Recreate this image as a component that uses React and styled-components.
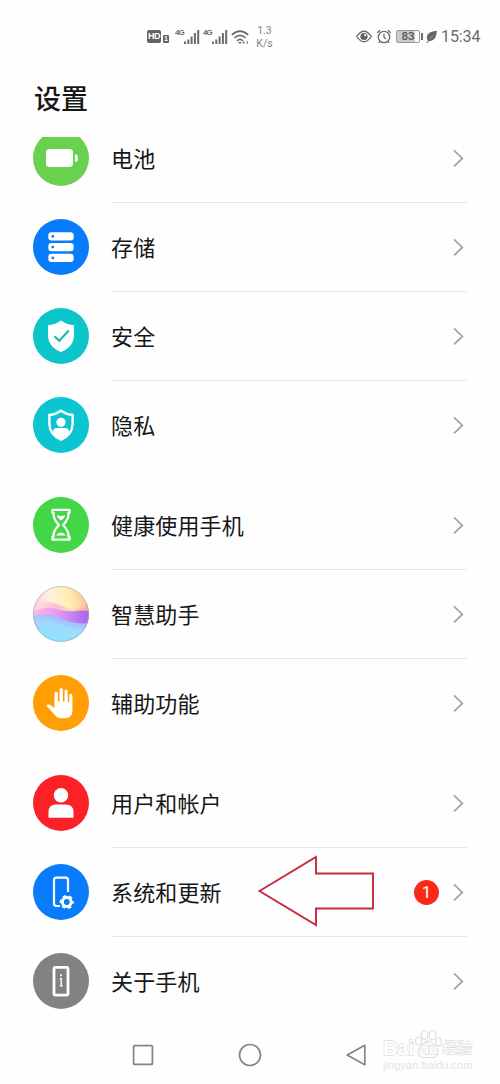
import React from "react";
import styled, { createGlobalStyle } from "styled-components";

const GlobalStyle = createGlobalStyle`
  * { box-sizing: border-box; }
  body { margin: 0; background: #fefefe; }
`;

const Screen = styled.main`
  position: relative;
  width: 500px;
  height: 1084px;
  overflow: hidden;
  display: flex;
  flex-direction: column;
  background: #fefefe;
  color: #161616;
  font-family: "Noto Sans CJK SC", sans-serif;
`;

const StatusBar = styled.header`
  height: 73px;
  padding: 0 20px 0 147px;
  display: flex;
  align-items: center;
  justify-content: space-between;
  color: #6b6b6b;
`;

const StatusGroup = styled.div`
  display: flex;
  align-items: center;
  gap: ${(p) => p.$gap}px;
`;

const Glyph = styled.svg`
  display: block;
  flex: none;
  overflow: visible;
  paint-order: normal;
`;

const HdBadge = styled.span`
  width: 14px;
  height: 13px;
  border-radius: 2px;
  background: #626262;
  color: #fff;
  font: 700 9px/13px "Liberation Sans", sans-serif;
  letter-spacing: -0.4px;
  text-align: center;
`;

const SimBadge = styled.span`
  width: 6px;
  height: 8px;
  margin: 5px 3px 0 0;
  border-radius: 1px;
  background: #626262;
  color: #fff;
  font: 700 7px/8px "Liberation Sans", sans-serif;
  text-align: center;
`;

const Signal = styled.span`
  display: flex;
  width: 25px;
  height: 14px;
`;

const Network = styled.span`
  width: 9px;
  margin-top: -1px;
  font: 700 8px/8px "Liberation Sans", sans-serif;
  letter-spacing: -0.9px;
`;

const Speed = styled.span`
  width: 17px;
  margin-left: 4px;
  font: 10.5px/13px Roboto, sans-serif;
  text-align: center;
  white-space: nowrap;
  color: #858585;
`;

const Battery = styled.span`
  position: relative;
  width: 24px;
  height: 13px;
  margin-right: 2px;
  border: 1px solid #999;
  border-radius: 2px;
  background: linear-gradient(90deg, #cbcbcb 83%, #fefefe 83%);
  color: #575757;
  font: 500 11.5px/11.5px Roboto, sans-serif;
  text-align: center;

  &::after {
    content: "";
    position: absolute;
    top: 2px;
    right: -4px;
    width: 2px;
    height: 7px;
    background: #6b6b6b;
  }
`;

const Clock = styled.span`
  width: 39px;
  font: 16px/18px Roboto, sans-serif;
  letter-spacing: -0.1px;
  white-space: nowrap;
`;

const Title = styled.h1`
  height: 64px;
  margin: 0;
  padding: 5px 34px 0;
  font-size: 27px;
  line-height: 40px;
  font-weight: 500;
`;

const List = styled.section`
  height: 889px;
  overflow: hidden;
  display: flex;
  flex-direction: column;
  justify-content: flex-end;
  gap: 11px;
  padding: 0 33px;
`;

const Group = styled.div`
  flex: none;
  display: flex;
  flex-direction: column;
`;

const Row = styled.div`
  height: 89px;
  display: flex;
  gap: 22px;
`;

const IconDisc = styled.span`
  flex: none;
  width: 56px;
  height: 56px;
  margin-top: 16.4px;
  border-radius: 50%;
  overflow: hidden;
  background: ${(p) => p.$color};
`;

const RowBody = styled.div`
  flex: 1;
  display: flex;
  align-items: center;
  padding-right: 3px;
  border-bottom: 1px solid ${(p) => (p.$last ? "transparent" : "#e6e6e6")};
`;

const Label = styled.span`
  flex: 1;
  padding-bottom: 2px;
  font-size: 22px;
  line-height: 32px;
  font-weight: 400;
  letter-spacing: 0.15px;
`;

const Count = styled.span`
  width: 25px;
  height: 25px;
  margin-right: 14px;
  border-radius: 50%;
  background: #fb2a18;
  color: #fff;
  font: 17px/25px Roboto, sans-serif;
  text-align: center;
`;

const NavBar = styled.nav`
  height: 58px;
  display: flex;
  justify-content: space-between;
  align-items: center;
  padding: 0 134px 0 132px;
`;

const Pointer = styled.svg`
  position: absolute;
  left: 256px;
  top: 853px;
`;

const Watermark = styled.div`
  position: absolute;
  left: 383px;
  top: 1029px;
  width: 92px;
  height: 46px;
  color: #fefefe;
  font-family: "Liberation Sans", "Noto Sans CJK SC", sans-serif;
`;

const MarkLine = styled.div`
  height: 30px;
  display: flex;
  align-items: flex-end;
  font-size: 20px;
  line-height: 22px;
  font-weight: 700;
  white-space: nowrap;
  paint-order: stroke fill;
  -webkit-text-stroke: 1.4px #dfdfdf;
`;

const MarkPaw = styled.span`
  position: relative;
  width: 28px;
  height: 30px;
`;

const PawText = styled.span`
  position: absolute;
  left: 6px;
  top: 13px;
  font-size: 14px;
  line-height: 14px;
`;

const MarkCjk = styled.span`
  font-size: 15px;
  line-height: 22px;
  font-weight: 400;
`;

const MarkUrl = styled.div`
  font-size: 11px;
  line-height: 13px;
  color: #e4e4e4;
  letter-spacing: 0.05px;
`;

const SHIELD = "M28 12.5 Q34.5 17 41 17.2 V27 C41 35.5 36 40.8 28 44 C20 40.8 15 35.5 15 27 V17.2 Q21.5 17 28 12.5Z";

const drawings = {
  battery: (
    <g fill="#fff">
      <rect x="13" y="19" width="27" height="18" rx="3.5" />
      <path d="M42 24.5h1.2q1.5 0 1.5 1.6v4q0 1.6-1.5 1.6H42z" />
    </g>
  ),
  storage: (
    <g>
      {[13.2, 24, 34.8].map((y) => (
        <g key={y}>
          <rect x="15.3" y={y} width="25.4" height="8.2" rx="3.2" fill="#fff" />
          <circle cx="19.8" cy={y + 4.1} r="1.4" fill="#087cf5" />
        </g>
      ))}
    </g>
  ),
  security: (
    <g>
      <path d={SHIELD} fill="#fff" />
      <path d="M21.5 28.2 26.3 32.8 35.8 22.5" fill="none" stroke="#18b8a8" strokeWidth="2" />
    </g>
  ),
  privacy: (
    <g>
      <path d="M28 13.8 Q34 17.7 39.6 18 V27 C39.6 34.5 35 39.5 28 42.7 C21 39.5 16.4 34.5 16.4 27 V18 Q22 17.7 28 13.8Z" fill="none" stroke="#fff" strokeWidth="2.4" />
      <circle cx="28" cy="25.3" r="4.6" fill="#fff" />
      <path d="M20 36.5V35q0-4 4-4h8q4 0 4 4v1.5Q33 40.5 28 42.7 23 40.5 20 36.5Z" fill="#fff" />
    </g>
  ),
  hourglass: (
    <g stroke="#fff" strokeWidth="2.3" fill="none" strokeLinejoin="round">
      <path d="M19.5 12.8H36.5V15.8H35.5C36 22 32.5 25.5 30 28 32.5 30.5 36 34 35.5 39.7H36.5V42.7H19.5V39.7H20.5C20 34 23.5 30.5 26 28 23.5 25.5 20 22 20.5 15.8H19.5Z" />
      <path d="M24 18q4 2 8 0-.2 3.2-4 5.5-3.8-2.3-4-5.5ZM23 38.5q5-6 10 0Z" fill="#fff" stroke="none" />
    </g>
  ),
  assistant: (
    <g>
      <defs>
        <linearGradient id="dawn" x1="0" y1=".45" x2="1" y2=".25">
          <stop offset="0" stopColor="#ffc9e3" />
          <stop offset=".35" stopColor="#fff0dc" />
          <stop offset=".65" stopColor="#fff0b0" />
          <stop offset="1" stopColor="#ffc08e" />
        </linearGradient>
        <linearGradient id="crest" x1="0" y1="0" x2="1" y2=".3">
          <stop offset="0" stopColor="#ffe0ee" stopOpacity=".3" />
          <stop offset=".4" stopColor="#ffbcd0" />
          <stop offset=".75" stopColor="#ffd9a8" />
          <stop offset="1" stopColor="#ff9f9f" />
        </linearGradient>
        <linearGradient id="wave" x1="0" y1="0" x2="1" y2="0">
          <stop offset="0" stopColor="#ffb9e2" />
          <stop offset=".35" stopColor="#f09df0" />
          <stop offset=".65" stopColor="#c987f4" />
          <stop offset="1" stopColor="#a565f0" />
        </linearGradient>
        <linearGradient id="sea" x1=".8" y1="0" x2=".3" y2="1">
          <stop offset="0" stopColor="#a9a4fa" />
          <stop offset=".45" stopColor="#a4d2fd" />
          <stop offset="1" stopColor="#84e2fb" />
        </linearGradient>
      </defs>
      <rect width="56" height="56" fill="url(#dawn)" />
      <path d="M0 23Q10 13 21 17T38 23Q47 24 56 16V40H0Z" fill="url(#crest)" />
      <path d="M0 26Q12 20 23 23T42 25Q49 24 56 25V43H0Z" fill="url(#wave)" />
      <path d="M0 30Q15 26 26 31 39 39 56 37V56H0Z" fill="url(#sea)" />
      <path d="M0 39Q12 33 23 37T46 43L56 41V56H0Z" fill="#97eafe" opacity=".35" />
      <circle cx="28" cy="28" r="27.5" fill="none" stroke="#a5a5b5" strokeOpacity=".65" />
    </g>
  ),
  hand: (
    <path d="M14.2 29.7Q16.5 29 18.5 30.8L21.5 33V18.5Q21.5 16.6 23.2 16.6T24.9 18.5V26.5H26.5V14.8Q26.5 13 28.2 13T29.9 14.8V26.5H31.5V16.3Q31.5 14.5 33.1 14.5T34.7 16.3V27H36.2V20.5Q36.2 18.8 37.8 18.8T39.4 20.5V36Q39.4 43.3 32 43.3H28.5Q24.5 43.3 21.8 40L14.2 31.4Q13 30 14.2 29.7Z" fill="#fff" />
  ),
  user: (
    <g fill="#fff">
      <circle cx="28" cy="20.3" r="7.2" />
      <path d="M15.5 42.7V37q0-7.5 7.5-7.5H33q7.5 0 7.5 7.5v5.7Z" />
    </g>
  ),
  update: (
    <g fill="none" stroke="#fff">
      <path d="M35 28V16.2Q35 13.7 32.5 13.7H23.5Q21 13.7 21 16.2V39.5Q21 42 23.5 42H27" strokeWidth="2.2" />
      <circle cx="33.8" cy="38" r="4.4" strokeWidth="3" />
      <circle cx="33.8" cy="38" r="6.2" strokeWidth="1.8" strokeDasharray="3.3 3.19" strokeDashoffset="1.6" />
    </g>
  ),
  about: (
    <g>
      <rect x="21" y="14.3" width="14" height="27.8" rx="1.5" fill="none" stroke="#fff" strokeWidth="2.8" />
      <circle cx="28" cy="22.3" r="1.1" fill="#fff" />
      <path d="M26.8 25.7H28.2V32.5M26.8 32.8H29.6" fill="none" stroke="#fff" strokeWidth="1.4" />
    </g>
  ),
};

const groups = [
  [
    { label: "电池", icon: "battery", color: "#68d14d" },
    { label: "存储", icon: "storage", color: "#087cfb" },
    { label: "安全", icon: "security", color: "#0bc5cb" },
    { label: "隐私", icon: "privacy", color: "#0bc5d1" },
  ],
  [
    { label: "健康使用手机", icon: "hourglass", color: "#43d647" },
    { label: "智慧助手", icon: "assistant", color: "#b8d8ff" },
    { label: "辅助功能", icon: "hand", color: "#ff9f05" },
  ],
  [
    { label: "用户和帐户", icon: "user", color: "#fc2127" },
    { label: "系统和更新", icon: "update", color: "#087cfb", count: 1 },
    { label: "关于手机", icon: "about", color: "#828282" },
  ],
];

function SignalStrength() {
  return (
    <Signal>
      <Network>4G</Network>
      <Glyph width="16" height="14" viewBox="0 0 16 14">
        <path d="M1 11.5V14M4.3 9.5V14M7.6 6.5V14M10.9 3V14M14.2 0V14" stroke="#6b6b6b" strokeWidth="2" />
      </Glyph>
    </Signal>
  );
}

function SettingsRow({ item, last }) {
  return (
    <Row>
      <IconDisc $color={item.color}>
        <Glyph width="56" height="56" viewBox="0 0 56 56">{drawings[item.icon]}</Glyph>
      </IconDisc>
      <RowBody $last={last}>
        <Label>{item.label}</Label>
        {item.count && <Count>{item.count}</Count>}
        <Glyph width="11" height="18" viewBox="0 0 11 18">
          <path d="M1 1.4 9.3 9.4 1 17.4" fill="none" stroke="#a3a3a3" strokeWidth="1.8" />
        </Glyph>
      </RowBody>
    </Row>
  );
}

export default function App() {
  return (
    <Screen>
      <GlobalStyle />
      <StatusBar>
        <StatusGroup $gap={3}>
          <StatusGroup $gap={2}>
            <HdBadge>HD</HdBadge>
            <SimBadge>1</SimBadge>
          </StatusGroup>
          <SignalStrength />
          <SignalStrength />
          <Glyph width="18" height="14" viewBox="0 0 18 14">
            <path d="M.8 5Q9-2.8 17.2 5M3.4 8Q9 2.6 14.6 8M6 10.8Q9 8 12 10.8" fill="none" stroke="#6b6b6b" strokeWidth="1.7" />
            <path d="M9 14 6.9 11.9H11ZM11.5 12.5 13.3 10.7V14.2ZM17.5 12.5 15.7 10.7V14.2Z" fill="#6b6b6b" />
          </Glyph>
          <Speed>1.3<br />K/s</Speed>
        </StatusGroup>
        <StatusGroup $gap={4}>
          <Glyph width="16" height="13" viewBox="0 0 16 13">
            <path d="M.7 6.5Q8-4 15.3 6.5 8 17 .7 6.5Z" fill="none" stroke="#6b6b6b" strokeWidth="1.3" />
            <circle cx="8" cy="6.5" r="3.6" fill="#626262" />
            <circle cx="9.2" cy="5.2" r="1.1" fill="#fff" />
          </Glyph>
          <Glyph width="16" height="15" viewBox="0 0 16 15">
            <g fill="none" stroke="#6b6b6b" strokeWidth="1.3">
              <circle cx="8" cy="8" r="5.7" />
              <path d="M8 4.8V8.3L10 10M1.2 3.8 4 1.2M14.8 3.8 12 1.2M4 12.2 2.8 14M12 12.2 13.2 14" />
            </g>
          </Glyph>
          <Battery>83</Battery>
          <Glyph width="11" height="13" viewBox="0 0 11 13">
            <path d="M11 .8Q1 1.5.8 7.3.7 9.5 2 10.5L.4 12.7H1.7L3 11Q7 11.5 9.2 7.6 10.5 5 11 .8Z" fill="#666" />
            <path d="M3.4 9.2 7.6 4.8" stroke="#bbb" strokeWidth=".6" />
          </Glyph>
          <Clock>15:34</Clock>
        </StatusGroup>
      </StatusBar>

      <Title>设置</Title>

      <List>
        {groups.map((items) => (
          <Group key={items[0].label}>
            {items.map((item, i) => (
              <SettingsRow key={item.label} item={item} last={i === items.length - 1} />
            ))}
          </Group>
        ))}
      </List>

      <NavBar>
        <Glyph width="22" height="22" viewBox="0 0 22 22">
          <rect x="1.6" y="1.6" width="18.8" height="18.8" rx="1" fill="none" stroke="#858585" strokeWidth="1.7" />
        </Glyph>
        <Glyph width="24" height="24" viewBox="0 0 24 24">
          <circle cx="12" cy="12" r="10.5" fill="none" stroke="#858585" strokeWidth="1.7" />
        </Glyph>
        <Glyph width="20" height="24" viewBox="0 0 20 24">
          <path d="M18.8 2.2V21.8L1.2 12Z" fill="none" stroke="#858585" strokeWidth="1.7" strokeLinejoin="round" />
        </Glyph>
      </NavBar>

      <Pointer width="120" height="76" viewBox="0 0 120 76">
        <path d="M3.5 38 60 4V20.5H117V55.5H60V72Z" fill="none" stroke="#c72b3b" strokeWidth="1.9" />
      </Pointer>

      <Watermark>
        <MarkLine>
          <span>Bai</span>
          <MarkPaw>
            <Glyph width="28" height="30" viewBox="0 0 28 30">
              <g fill="#fefefe" stroke="#dcdcdc" strokeWidth="1.1">
                <ellipse cx="4.5" cy="12" rx="3" ry="4" />
                <ellipse cx="10.5" cy="6" rx="3.3" ry="4.5" />
                <ellipse cx="18.5" cy="6" rx="3.3" ry="4.5" />
                <ellipse cx="24.5" cy="13" rx="3" ry="4" />
                <path d="M9 15Q14 8.5 19 15L23 19.5Q26 26 20 28.5H8Q2 26 5 19.5Z" />
              </g>
            </Glyph>
            <PawText>du</PawText>
          </MarkPaw>
          <MarkCjk>经验</MarkCjk>
        </MarkLine>
        <MarkUrl>jingyan.baidu.com</MarkUrl>
      </Watermark>
    </Screen>
  );
}
